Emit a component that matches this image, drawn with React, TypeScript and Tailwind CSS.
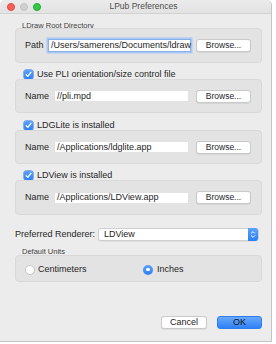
import { ReactNode } from 'react';

function GroupBox({ children, className = '' }: { children: ReactNode; className?: string }) {
  return (
    <div className={`w-[247px] rounded-[4px] border border-[#d9d9d9] bg-[#e3e3e3] ${className}`}>
      {children}
    </div>
  );
}

function Checkbox() {
  return (
    <span className="flex h-[9px] w-[9px] items-center justify-center rounded-[2px] bg-gradient-to-b from-[#5aa2fb] to-[#2b7ff6] shadow-[0_0_0_0.5px_#2c6fd6]">
      <svg width="7" height="7" viewBox="0 0 7 7">
        <path d="M1.2 3.7 L2.8 5.4 L5.9 1.3" fill="none" stroke="white" strokeWidth="1.3" strokeLinecap="round" strokeLinejoin="round" />
      </svg>
    </span>
  );
}

function Browse() {
  return (
    <button
      type="button"
      className="flex h-[13px] w-[55px] items-center justify-center rounded-[3px] border border-[#c9c9c9] bg-white text-[8.5px] leading-none text-[#262626] shadow-[0_0.5px_0.5px_rgba(0,0,0,0.12)]"
    >
      Browse...
    </button>
  );
}

function CheckRow({ label, className = '' }: { label: string; className?: string }) {
  return (
    <div className={`flex h-[10px] items-center pl-[9px] ${className}`}>
      <Checkbox />
      <span className="ml-[4px] text-[9px] leading-none text-[#262626]">{label}</span>
    </div>
  );
}

function NameRow({ value }: { value: string }) {
  return (
    <div className="flex h-full items-center pl-[9px]">
      <span className="w-[29px] text-[9px] leading-none text-[#262626]">Name</span>
      <div className="flex h-[12px] w-[135px] items-center border border-[#e2e2e2] bg-white pl-[2px] text-[9px] leading-none text-[#262626]">
        {value}
      </div>
      <div className="ml-[7px]">
        <Browse />
      </div>
    </div>
  );
}

export default function App() {
  return (
    <div className="h-[344px] w-[276px] bg-white" style={{ fontFamily: '"Liberation Sans", Arial, sans-serif' }}>
      <div className="flex h-[342px] w-[272px] flex-col overflow-hidden rounded-t-[5px] border-r border-b border-[#c4c4c4] bg-[#ececec]">
        <div className="relative flex h-[14px] items-center border-b border-[#d2d2d2] bg-gradient-to-b from-[#ebebeb] to-[#e2e2e2]">
          <div className="absolute left-[7px] top-[3px] flex gap-[5px]">
            <span className="h-[8px] w-[8px] rounded-full border-[0.5px] border-[#e0443e] bg-[#fc605c]" />
            <span className="h-[8px] w-[8px] rounded-full border-[0.5px] border-[#c4c4c4] bg-[#d0d0d0]" />
            <span className="h-[8px] w-[8px] rounded-full border-[0.5px] border-[#1aab29] bg-[#34c84a]" />
          </div>
          <div className="w-full pl-[16px] text-center text-[8.5px] leading-none text-[#4d4d4d]">LPub Preferences</div>
        </div>

        <div className="flex flex-1 flex-col pl-[15px]">
          <div className="mt-[8px] pl-[7px] text-[7.5px] leading-[7px] text-[#3f3f3f]">LDraw Root Directory</div>
          <GroupBox className="mt-[-1px] h-[35px]">
            <div className="flex h-full items-center pl-[9px]">
              <span className="w-[23px] text-[9px] leading-none text-[#262626]">Path</span>
              <div className="flex h-[13px] w-[143px] items-center border border-[#86b1ea] bg-white pl-[2px] text-[9px] leading-none text-[#262626] shadow-[0_0_0_1.5px_#a9c8f2]">
                /Users/samerens/Documents/ldraw
              </div>
              <div className="ml-[5px]">
                <Browse />
              </div>
            </div>
          </GroupBox>

          <CheckRow label="Use PLI orientation/size control file" className="mt-[6px]" />
          <GroupBox className="h-[34px]">
            <NameRow value="//pli.mpd" />
          </GroupBox>

          <CheckRow label="LDGLite is installed" className="mt-[7px]" />
          <GroupBox className="h-[34px]">
            <NameRow value="/Applications/ldglite.app" />
          </GroupBox>

          <CheckRow label="LDView is installed" className="mt-[6px]" />
          <GroupBox className="h-[35px]">
            <NameRow value="/Applications/LDView.app" />
          </GroupBox>

          <div className="mt-[13px] flex h-[13px] items-center">
            <span className="w-[83px] text-[9px] leading-none text-[#262626]">Preferred Renderer:</span>
            <div className="flex h-[13px] w-[161px] items-center rounded-[3px] border border-[#cfcfcf] bg-white shadow-[0_0.5px_0.5px_rgba(0,0,0,0.1)]">
              <span className="flex-1 pl-[5px] text-[9px] leading-none text-[#262626]">LDView</span>
              <span className="flex h-[13px] w-[10px] items-center justify-center rounded-r-[3px] bg-gradient-to-b from-[#5aa2fb] to-[#2b7ff6]">
                <svg width="6" height="9" viewBox="0 0 6 9">
                  <path d="M1.3 3.3 L3 1.6 L4.7 3.3 M1.3 5.7 L3 7.4 L4.7 5.7" fill="none" stroke="white" strokeWidth="1" strokeLinecap="round" strokeLinejoin="round" />
                </svg>
              </span>
            </div>
          </div>

          <div className="mt-[7px] pl-[7px] text-[7.5px] leading-[8px] text-[#3f3f3f]">Default Units</div>
          <GroupBox className="mt-[-1px] h-[27px]">
            <div className="flex h-full items-center pt-[2px] pl-[9px]">
              <span className="h-[10px] w-[10px] rounded-full border border-[#c6c6c6] bg-white" />
              <span className="ml-[3px] w-[105px] text-[9px] leading-none text-[#262626]">Centimeters</span>
              <span className="flex h-[10px] w-[10px] items-center justify-center rounded-full bg-gradient-to-b from-[#5aa2fb] to-[#2b7ff6]">
                <span className="h-[3.5px] w-[3.5px] rounded-full bg-white" />
              </span>
              <span className="ml-[4px] text-[9px] leading-none text-[#262626]">Inches</span>
            </div>
          </GroupBox>

          <div className="flex-1" />
          <div className="mb-[12px] flex w-[247px] justify-end gap-[10px]">
            <button
              type="button"
              className="flex h-[13px] w-[46px] items-center justify-center rounded-[3px] border border-[#c9c9c9] bg-white text-[9px] leading-none text-[#262626] shadow-[0_0.5px_0.5px_rgba(0,0,0,0.12)]"
            >
              Cancel
            </button>
            <button
              type="button"
              className="flex h-[13px] w-[45px] items-center justify-center rounded-[3px] border border-[#2f7ef0] bg-gradient-to-b from-[#67a9fb] to-[#2f7ff6] text-[9px] leading-none text-[#111111]"
            >
              OK
            </button>
          </div>
        </div>
      </div>
    </div>
  );
}
